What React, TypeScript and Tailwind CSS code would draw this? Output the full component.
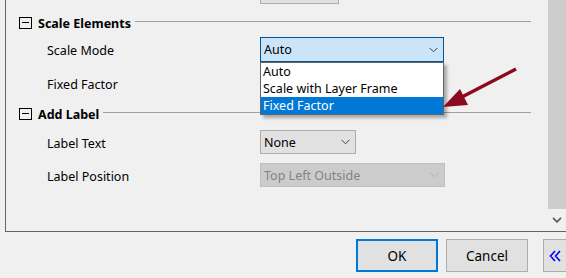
const Chevron = ({ color = "#444" }: { color?: string }) => (
  <svg width="9" height="6" viewBox="0 0 9 6" className="shrink-0">
    <path d="M0.5 0.8 L4.5 4.8 L8.5 0.8" fill="none" stroke={color} strokeWidth="1" />
  </svg>
);

const Header = ({ title }: { title: string }) => (
  <div className="flex h-[16px] items-center pl-[13px] pr-[17px]">
    <div className="relative h-[12px] w-[13px] shrink-0 border border-black">
      <div className="absolute left-[2px] right-[2px] top-[4px] h-px bg-black" />
    </div>
    <span className="ml-[6px] pt-[3px] text-[12.5px] font-bold text-black">{title}</span>
    <div className="mb-[4px] ml-[4px] h-px flex-1 bg-[#a0a0a0]" />
  </div>
);

const Row = ({ label, children, h }: { label: string; children?: React.ReactNode; h: string }) => (
  <div className={`flex items-center pl-[41px] ${h}`}>
    <span className="w-[213px] shrink-0 pt-[4px] text-[12.5px] text-black">{label}</span>
    {children}
  </div>
);

export default function App() {
  return (
    <div className="relative flex h-[278px] w-[566px] flex-col overflow-hidden bg-[#f0f0f0] font-['Noto_Sans',sans-serif]">
      <div className="ml-[5px] flex h-[232px] border-b border-l border-[#646464]">
        <div className="flex flex-1 flex-col">
          <div className="ml-[254px] h-[4px] w-[79px] border-x border-b border-[#adadad] bg-[#e1e1e1]" />

          <div className="mt-[11px]">
            <Header title="Scale Elements" />
          </div>

          <div className="mt-[6px]">
            <Row label="Scale Mode" h="h-[25px]">
              <div className="relative">
                <div className="flex h-[25px] w-[184px] items-center justify-between border border-[#005499] bg-[#cce4f7] pl-[3px] pr-[5px] text-[12.5px] text-black">
                  <span className="pt-[2px]">Auto</span>
                  <Chevron />
                </div>
                <div className="absolute left-0 top-[25px] z-10 flex w-[184px] flex-col border border-[#646464] bg-white text-[12.5px] shadow-[3px_3px_3px_rgba(0,0,0,0.3)]">
                  <div className="flex h-[17px] items-center pl-[2px] pt-[2px] text-black">Auto</div>
                  <div className="flex h-[17px] items-center pl-[2px] pt-[2px] text-black">Scale with Layer Frame</div>
                  <div className="flex h-[17px] items-center bg-[#0078d7] pl-[2px] pt-[2px] text-white">Fixed Factor</div>
                </div>
              </div>
            </Row>
          </div>

          <div className="mt-[9px]">
            <Row label="Fixed Factor" h="h-[25px]" />
          </div>

          <div className="mt-[10px]">
            <Header title="Add Label" />
          </div>

          <div className="mt-[8px]">
            <Row label="Label Text" h="h-[24px]">
              <div className="flex h-[24px] w-[96px] items-center justify-between border border-[#adadad] bg-[#e1e1e1] pl-[3px] pr-[5px] text-[12.5px] text-black">
                <span className="pt-[2px]">None</span>
                <Chevron />
              </div>
            </Row>
          </div>

          <div className="mt-[9px]">
            <Row label="Label Position" h="h-[24px]">
              <div className="flex h-[24px] w-[185px] items-center justify-between border border-[#bfbfbf] bg-[#cccccc] pl-[3px] pr-[5px] text-[12.5px] text-[#838383]">
                <span className="pt-[2px]">Top Left Outside</span>
                <Chevron color="#b0b0b0" />
              </div>
            </Row>
          </div>
        </div>

        <div className="flex w-[18px] shrink-0 flex-col">
          <div className="h-[209px] bg-[#cdcdcd]" />
          <div className="flex flex-1 items-center justify-center pr-[1px]">
            <svg width="10" height="6" viewBox="0 0 10 6">
              <path d="M1 0.8 L5 4.8 L9 0.8" fill="none" stroke="#606060" strokeWidth="1.8" />
            </svg>
          </div>
        </div>
      </div>

      <div className="flex pl-[356px] pt-[7px] text-[13.5px] text-black">
        <button className="flex h-[33px] w-[82px] shrink-0 items-center justify-center border-2 border-[#0078d7] bg-[#e1e1e1] pt-[1px]">
          OK
        </button>
        <button className="ml-[8px] flex h-[33px] w-[82px] shrink-0 items-center justify-center border border-[#adadad] bg-[#e1e1e1] pt-[1px]">
          Cancel
        </button>
        <button className="ml-[15px] flex h-[33px] w-[30px] shrink-0 items-center border border-[#adadad] bg-[#e1e1e1] pl-[5px]">
          <svg width="12" height="12" viewBox="0 0 12 12">
            <path d="M6 1 L1.5 6 L6 11 M11 1 L6.5 6 L11 11" fill="none" stroke="#0000ff" strokeWidth="1.6" />
          </svg>
        </button>
      </div>

      <svg className="pointer-events-none absolute left-[440px] top-[60px] z-20" width="85" height="55" viewBox="0 0 85 55">
        <line x1="76" y1="9" x2="20" y2="38" stroke="#8b0a1e" strokeWidth="3.5" />
        <polygon points="3,47 20,29 28,45" fill="#8b0a1e" />
      </svg>
    </div>
  );
}
